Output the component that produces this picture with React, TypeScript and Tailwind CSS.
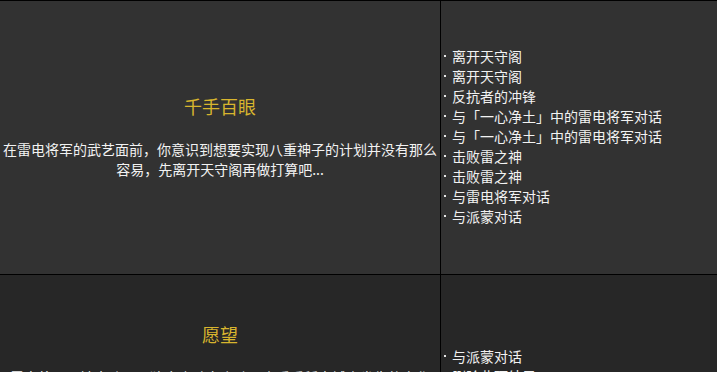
import React from "react";

interface Quest {
  title: string;
  desc: string;
  steps: string[];
}

const quests: Quest[] = [
  {
    title: "千手百眼",
    desc: "在雷电将军的武艺面前，你意识到想要实现八重神子的计划并没有那么容易，先离开天守阁再做打算吧...",
    steps: [
      "离开天守阁",
      "离开天守阁",
      "反抗者的冲锋",
      "与「一心净土」中的雷电将军对话",
      "与「一心净土」中的雷电将军对话",
      "击败雷之神",
      "击败雷之神",
      "与雷电将军对话",
      "与派蒙对话",
    ],
  },
  {
    title: "愿望",
    desc: "雷电将军已被击败，眼狩令也随之废除，去看看稻妻城中发生的变化吧，也许还有人在等你...",
    steps: ["与派蒙对话", "删除此项结果"],
  },
];

function QuestRow({ q, first }: { q: Quest; first: boolean }) {
  return (
    <div
      className={`grid grid-cols-[441px_1fr] border-b border-black ${
        first ? "bg-[#323232] min-h-[274px]" : "bg-[#272727] min-h-[182px]"
      }`}
    >
      <div
        className={`flex flex-col items-center justify-center border-r border-black text-center ${
          first ? "pb-[4px]" : "pb-[4px]"
        }`}
      >
        <div className="text-[18px] leading-[27px] text-[#d8b52e]">{q.title}</div>
        <p className="mt-[19px] text-[14px] leading-[20px] text-[#f2f2f2]">{q.desc}</p>
      </div>
      <ul
        className={`flex flex-col justify-center text-[14px] leading-[20px] text-[#f2f2f2] ${
          first ? "pb-[4px]" : ""
        }`}
      >
        {q.steps.map((s, i) => (
          <li key={i} className="flex items-center">
            <span className="ml-[3px] mr-[6px] h-[2px] w-[2px] shrink-0 bg-[#e6e6e6]" />
            <span>{s}</span>
          </li>
        ))}
      </ul>
    </div>
  );
}

export default function App() {
  return (
    <div
      className="h-[372px] w-[717px] overflow-hidden bg-[#272727] border-t border-black"
      style={{ fontFamily: '"Noto Sans CJK SC", "Noto Sans", sans-serif' }}
    >
      {quests.map((q, i) => (
        <QuestRow key={i} q={q} first={i === 0} />
      ))}
    </div>
  );
}
